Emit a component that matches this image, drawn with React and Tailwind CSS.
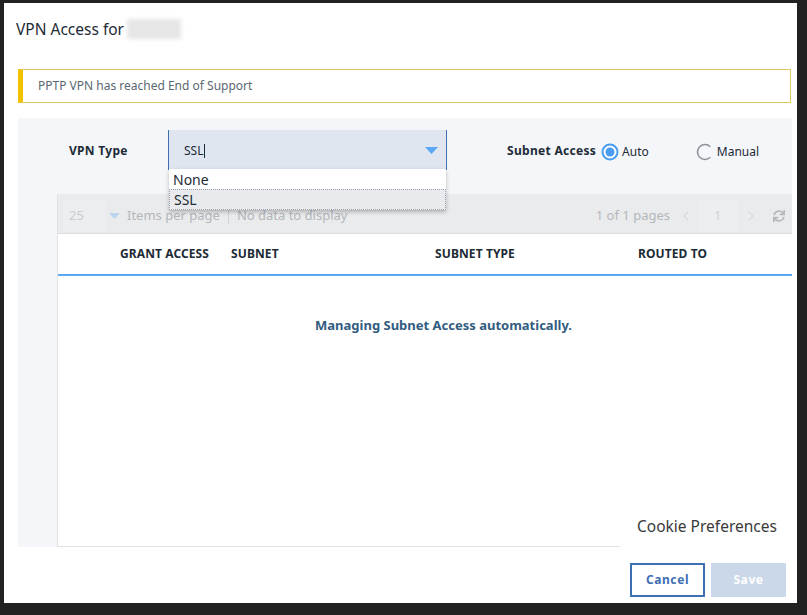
import { ChevronLeft, ChevronRight } from "lucide-react";
import { FaSync } from "react-icons/fa";

const font = { fontFamily: '"Noto Sans", "Open Sans", Arial, sans-serif' };

const Radio = ({ checked }) =>
  checked ? (
    <svg width="18" height="18" viewBox="0 0 18 18">
      <circle cx="9" cy="9" r="7.5" fill="white" stroke="#4a9cf0" strokeWidth="2" />
      <circle cx="9" cy="9" r="4.5" fill="#4a9cf0" />
    </svg>
  ) : (
    <svg width="18" height="18" viewBox="0 0 18 18">
      <path d="M14.3 3.7 A7.5 7.5 0 1 0 14.3 14.3" fill="none" stroke="#8d9499" strokeWidth="1.6" />
    </svg>
  );

export default function App() {
  return (
    <div className="w-[807px] h-[615px] bg-[#222222] pt-[3px] pl-[4px] overflow-hidden" style={font}>
      <div className="relative w-[793px] h-[600px] bg-white flex flex-col">
        <div className="pt-[14px] pl-[12px] flex items-center h-[38px]">
          <span className="text-[15.5px] leading-[24px] text-[#1d2b36]">VPN Access for</span>
          <span className="ml-[3px] inline-block w-[54px] h-[20px] bg-[#e6e6e6] blur-[2px]" />
        </div>

        <div className="mt-[28px] ml-[14px] mr-[6px] h-[34px] border border-[#e2c85a] border-l-[5px] border-l-[#f2c200] flex items-center pl-[15px] text-[12px] text-[#5a6872]">
          PPTP VPN has reached End of Support
        </div>

        <div className="relative mt-[15px] ml-[14px] mr-[5px] h-[429px] bg-[#f4f6fa] flex flex-col">
          <div className="mt-[12px] h-[40px] flex items-center">
            <span className="mt-[2px] ml-[51px] w-[99px] text-[12px] font-bold text-[#1d2b36] tracking-[0.3px]">VPN Type</span>
            <div className="relative w-[279px] h-[40px] bg-[#dfe6f0] border-x border-[#3d70b2] flex items-center pl-[15px] text-[12px] text-[#1d2b36]">
              <span className="mt-[2px] flex items-center">
                SSL<span className="ml-[1px] inline-block w-px h-[14px] bg-[#1d2b36]" />
              </span>
              <svg className="absolute right-[8px] top-[17px]" width="13" height="7" viewBox="0 0 13 7">
                <path d="M0 0 H13 L6.5 7 Z" fill="#5aa7f5" />
              </svg>
              <div className="absolute left-0 top-[39px] w-[277px] bg-white shadow-[0_2px_4px_rgba(0,0,0,0.25)] z-10 text-[14px] text-[#1d2b36]">
                <div className="h-[20px] flex items-center pl-[4px]">None</div>
                <div className="h-[21px] flex items-center pl-[4px] bg-[#e8eaed] border border-dotted border-[#9aa3ab]">SSL</div>
              </div>
            </div>
            <span className="mt-[2px] ml-[60px] text-[12px] font-bold text-[#1d2b36] tracking-[0.3px]">Subnet Access</span>
            <div className="mt-[4px] ml-[5px] flex items-center">
              <Radio checked />
              <span className="ml-[3px] text-[12px] text-[#1d2b36]">Auto</span>
            </div>
            <div className="mt-[4px] ml-[47px] flex items-center">
              <Radio />
              <span className="ml-[3px] text-[12px] text-[#1d2b36]">Manual</span>
            </div>
          </div>

          <div className="mt-[24px] ml-[39px] flex-1 flex flex-col border-l border-b border-[#dfe3e6] bg-white">
            <div className="h-[40px] bg-[#eaebed] border-b border-[#dcdfe2] flex items-center pt-[4px] text-[13px] text-[#b3b7bb]">
              <div className="ml-[5px] w-[42px] h-[32px] bg-[#eceeef] flex items-center pl-[6px] text-[#c9cdd0]">25</div>
              <svg className="ml-[4px]" width="11" height="6" viewBox="0 0 11 6">
                <path d="M0 0 H11 L5.5 6 Z" fill="#bcd5ef" />
              </svg>
              <span className="ml-[7px]">Items per page</span>
              <span className="ml-[8px] w-px h-[16px] bg-[#cfd3d6]" />
              <span className="ml-[8px]">No data to display</span>
              <span className="ml-auto">1 of 1 pages</span>
              <ChevronLeft className="ml-[8px]" size={16} strokeWidth={1.3} color="#c9cdd0" />
              <div className="ml-[4px] w-[39px] h-[32px] bg-[#eceeef] flex items-center pl-[16px] text-[#cfd3d6]">1</div>
              <ChevronRight className="ml-[6px]" size={16} strokeWidth={1.3} color="#c9cdd0" />
              <FaSync className="ml-[14px] mr-[7px]" size={12} color="#b3b7bb" />
            </div>
            <div className="h-[42px] border-b-2 border-[#5aa7f5] flex items-center text-[12px] font-bold text-[#1d2b36] tracking-[0.1px]">
              <span className="ml-[62px] w-[111px]">GRANT ACCESS</span>
              <span className="w-[204px]">SUBNET</span>
              <span className="w-[203px]">SUBNET TYPE</span>
              <span>ROUTED TO</span>
            </div>
            <div className="flex-1 flex justify-center pt-[39px] pl-[37px]">
              <span className="text-[13px] font-bold text-[#325c80] h-[20px] leading-[20px]">Managing Subnet Access automatically.</span>
            </div>
          </div>
        </div>

        <div className="mt-[16px] mr-[11px] flex justify-end gap-[6px]">
          <button className="w-[75px] h-[34px] border-2 border-[#3d70b2] text-[#3d70b2] text-[12px] font-bold tracking-[0.6px]">Cancel</button>
          <button className="w-[75px] h-[34px] bg-[#cbd8ea] text-white text-[12px] font-bold tracking-[0.6px]">Save</button>
        </div>

        <div className="absolute left-[616px] top-[501px] w-[177px] h-[46px] bg-white flex items-center pl-[17px] text-[15.5px] text-[#3a3a3a]">
          Cookie Preferences
        </div>
      </div>
    </div>
  );
}
